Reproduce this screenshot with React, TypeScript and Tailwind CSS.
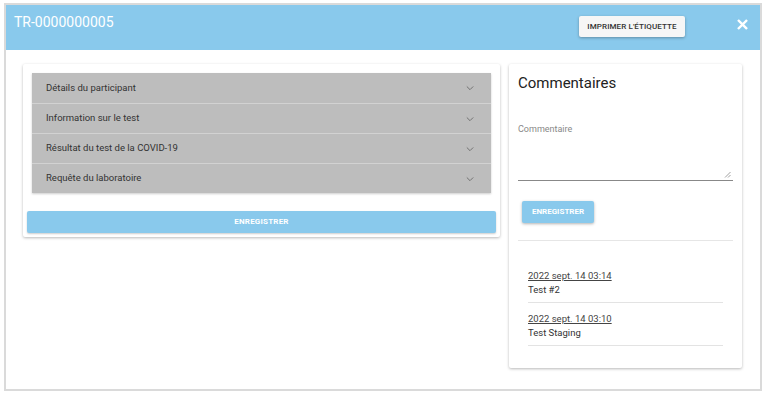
import React from 'react';

const sections = [
    'Détails du participant',
    'Information sur le test',
    'Résultat du test de la COVID-19',
    'Requête du laboratoire',
];

const comments = [
    { date: '2022 sept. 14 03:14', text: 'Test #2' },
    { date: '2022 sept. 14 03:10', text: 'Test Staging' },
];

const Chevron = () => (
    <svg width="10" height="10" viewBox="0 0 24 24" fill="none" stroke="#6b6b6b" strokeWidth="2.2" strokeLinecap="round" strokeLinejoin="round">
        <path d="M5 9l7 7 7-7" />
    </svg>
);

const App = () => {
    return (
        <div className="w-[766px] h-[395px] bg-white pl-[4px] pt-[3px]" style={{ fontFamily: 'Roboto, "Liberation Sans", sans-serif' }}>
            <div className="w-[758px] h-[388px] border-2 border-[#dadada] flex flex-col">
                {/* header */}
                <div className="h-[45px] bg-[#89c9ec] flex items-start justify-between pl-[8px] pr-[12px] shrink-0">
                    <div className="text-white text-[14px] mt-[7px]">TR-0000000005</div>
                    <div className="flex items-center gap-[52px] mt-[11px]">
                        <button className="h-[21px] w-[106px] bg-[#f6f6f6] rounded-[2px] shadow-[0_1px_3px_rgba(0,0,0,0.3)] text-[8px] font-medium text-[#333] tracking-[0.1px]">
                            IMPRIMER L'ÉTIQUETTE
                        </button>
                        <svg width="11" height="11" viewBox="0 0 12 12" stroke="white" strokeWidth="2.6" strokeLinecap="square" className="mt-[-4px]">
                            <path d="M2 2l8 8M10 2l-8 8" />
                        </svg>
                    </div>
                </div>

                {/* body */}
                <div className="flex items-start gap-[9px] pl-[17px] pt-[14px]">
                    {/* left card */}
                    <div className="w-[477px] bg-white rounded-[2px] shadow-[0_1px_3px_rgba(0,0,0,0.28)] pt-[9px] pb-[4px] px-[4px]">
                        <div className="mx-[5px] bg-[#bdbdbd] shadow-[0_1px_2px_rgba(0,0,0,0.2)]">
                            {sections.map((s, i) => (
                                <div key={i} className={`h-[30px] flex items-center justify-between pl-[14px] pr-[16px] ${i > 0 ? 'border-t border-[#d2d2d2]' : ''}`}>
                                    <span className="text-[9.5px] text-[#333]">{s}</span>
                                    <Chevron />
                                </div>
                            ))}
                        </div>
                        <button className="mt-[18px] w-full h-[22px] bg-[#89c9ec] rounded-[2px] shadow-[0_1px_2px_rgba(0,0,0,0.2)] text-white text-[8px] font-bold tracking-[0.2px]">
                            ENREGISTRER
                        </button>
                    </div>

                    {/* right card */}
                    <div className="w-[233px] bg-white rounded-[2px] shadow-[0_1px_3px_rgba(0,0,0,0.28)] px-[9px] pt-[8px] pb-[22px]">
                        <div className="text-[15px] text-[#222]">Commentaires</div>
                        <div className="mt-[28px] text-[9px] text-[#888]">Commentaire</div>
                        <div className="relative h-[45px] border-b border-[#888]">
                            <svg width="7" height="7" viewBox="0 0 7 7" stroke="#888" strokeWidth="0.8" className="absolute right-[2px] bottom-[2px]">
                                <path d="M1 6.5L6.5 1M4 6.5L6.5 4" />
                            </svg>
                        </div>
                        <button className="mt-[20px] ml-[4px] h-[22px] w-[72px] bg-[#89c9ec] rounded-[2px] shadow-[0_1px_3px_rgba(0,0,0,0.3)] text-white text-[8px] font-bold">
                            ENREGISTRER
                        </button>
                        <div className="mt-[17px] border-t border-[#e6e6e6]" />
                        <div className="mx-[10px] mt-[28px]">
                            {comments.map((c, i) => (
                                <div key={i} className={`border-b border-[#e3e3e3] pb-[5px] ${i > 0 ? 'pt-[9px]' : ''}`}>
                                    <div className="text-[9.5px] text-[#444] underline leading-[14px]">{c.date}</div>
                                    <div className="text-[9.5px] text-[#333] leading-[14px]">{c.text}</div>
                                </div>
                            ))}
                        </div>
                    </div>
                </div>
            </div>
        </div>
    );
};

export default App;
